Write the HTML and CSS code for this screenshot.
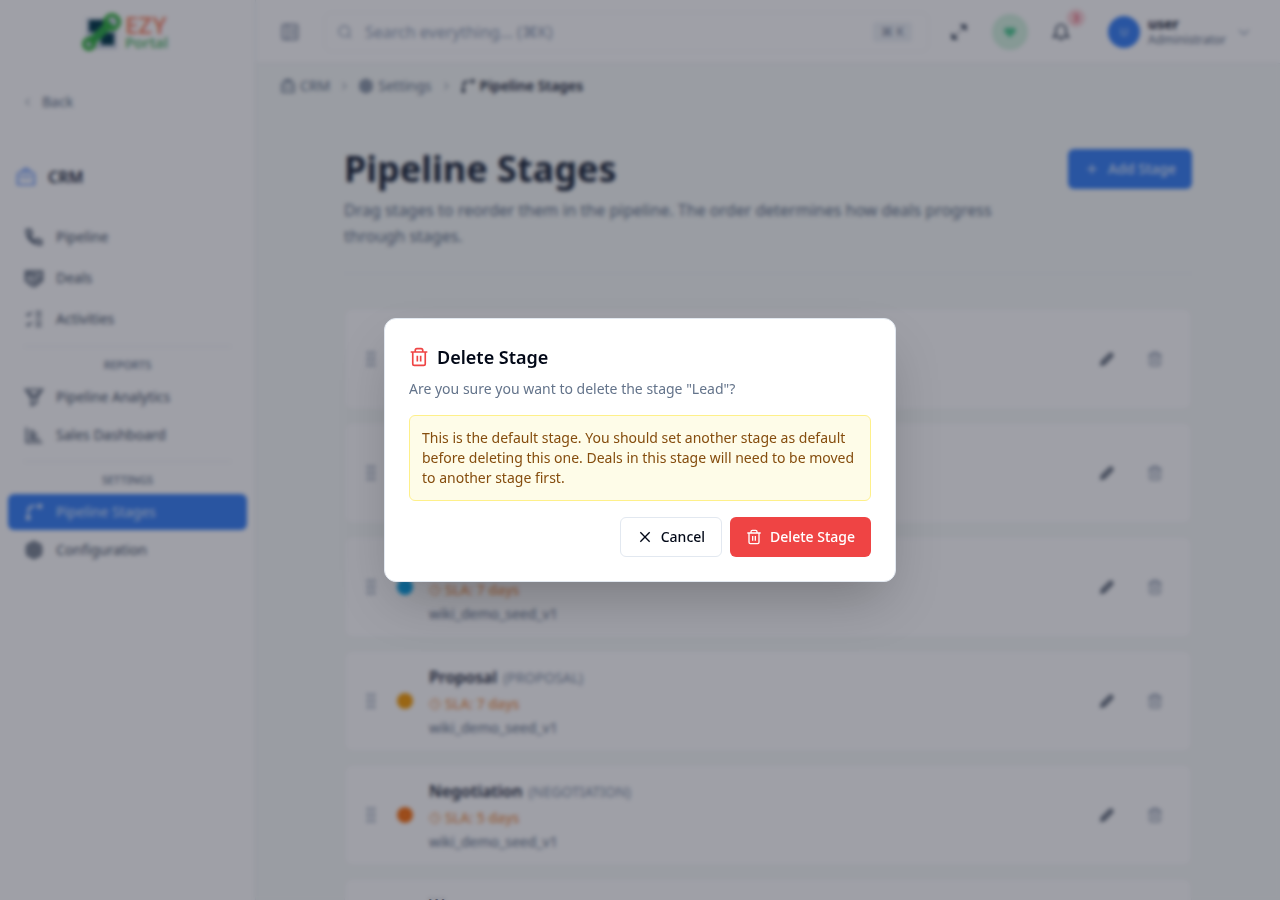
FILE: index.html
```html
<!DOCTYPE html>
<html lang="en">
<head>
<meta charset="UTF-8" />
<meta name="viewport" content="width=device-width, initial-scale=1" />
<title>Pipeline Stages - EZY Portal</title>
<link rel="stylesheet" href="styles.css">
</head>
<body>
  <!-- shared icons -->
  <svg class="sprite" aria-hidden="true">
    <symbol id="i-trash" viewBox="0 0 24 24"><path d="M2 6h20M4.500 6v14a2 2 0 0 0 2 2h11a2 2 0 0 0 2-2V6M7.500 6V4a2 2 0 0 1 2-2h5a2 2 0 0 1 2 2v2M10 10.500v7M14 10.500v7"/></symbol>
    <symbol id="i-pencil" viewBox="0 0 24 24"><path d="M3 21l1-5L16 4a2 2 0 0 1 3 0l1 1a2 2 0 0 1 0 3L8 20z" fill="currentColor" fill-opacity=".5"/></symbol>
    <symbol id="i-grip" viewBox="0 0 24 24"><path d="M9 3v4M9 10v4M9 17v4M15 3v4M15 10v4M15 17v4" stroke-width="4"/></symbol>
    <symbol id="i-clock" viewBox="0 0 24 24"><circle cx="12" cy="12" r="10"/><path d="M12 6v6l4 2"/></symbol>
    <symbol id="i-case" viewBox="0 0 24 24"><path d="M3 9l3-3h12l3 3v12H3zM8 6V3h8v3M3 12l5 2h8l5-2"/></symbol>
    <symbol id="i-gear" viewBox="0 0 24 24"><path d="M12 2l8 4 1 6-1 6-8 4-8-4-1-6 1-6z" fill="currentColor" fill-opacity=".5"/><circle cx="12" cy="12" r="4"/></symbol>
    <symbol id="i-stages" viewBox="0 0 24 24"><path d="M5 19V10a5 5 0 0 1 5-5h4"/><circle cx="5" cy="19" r="2" fill="currentColor"/><circle cx="19" cy="5" r="2" fill="currentColor"/><path d="M5 11l4-6"/></symbol>
    <symbol id="i-right" viewBox="0 0 24 24"><path d="M9 5l7 7-7 7"/></symbol>
  </svg>

  <div class="app">
    <aside class="sidebar">
      <div class="brand">
        <svg class="brand-mark" viewBox="0 0 40 40">
          <rect x="5" y="6" width="31" height="31" fill="#cbd5e1"/>
          <path d="M8 8h14v12H8zM20 21h13v12H20z" fill="#063b4c"/>
          <path d="M9 31L30 11" stroke="#2fa84a" stroke-width="9"/>
          <circle cx="31" cy="10" r="7" fill="none" stroke="#35b23f" stroke-width="4"/>
          <circle cx="8" cy="32" r="5" fill="none" stroke="#35b23f" stroke-width="4"/>
        </svg>
        <div class="brand-name"><span class="brand-ezy">EZY</span><span class="brand-portal">Portal</span></div>
      </div>
      <a class="back" href="#"><svg class="icon icon-xs" viewBox="0 0 24 24"><path d="M15 5l-7 7 7 7"/></svg>Back</a>
      <div class="module"><svg class="icon icon-md" viewBox="0 0 24 24"><path d="M2 10a4 4 0 0 1 4-4h12a4 4 0 0 1 4 4v11H2zM8 6a4 4 0 0 1 8 0M5 12h14"/></svg>CRM</div>
      <nav class="nav">
        <div class="nav-group nav-main">
          <a class="nav-item" href="#"><svg class="icon icon-md" viewBox="0 0 24 24"><path d="M3 3h5l2 6-3 2c1 3 3 5 6 6l2-3 6 2v5C11 22 2 13 3 3z" fill="currentColor" fill-opacity=".3"/></svg>Pipeline</a>
          <a class="nav-item" href="#"><svg class="icon icon-md" viewBox="0 0 24 24"><path d="M2 4h20v11l-9 7-4-1-7-6zM2 9l6-2 4 3 4-2M9 14l4 3 7-6" fill="currentColor" fill-opacity=".3"/></svg>Deals</a>
          <a class="nav-item" href="#"><svg class="icon icon-md" viewBox="0 0 24 24"><path d="M3 6l2 2 4-4M3 18l2 2 4-4M14 4h7M14 9h7M14 15h7M14 20h7"/></svg>Activities</a>
        </div>
        <hr>
        <h2 class="nav-label">Reports</h2>
        <div class="nav-group">
          <a class="nav-item" href="#"><svg class="icon icon-md" viewBox="0 0 24 24"><path d="M2 3h20l-7 10v6l-6 3v-9zM6 6l6 6 6-6"/></svg>Pipeline Analytics</a>
          <a class="nav-item" href="#"><svg class="icon icon-md" viewBox="0 0 24 24"><path d="M3 3v18h19M7 7h5M7 11h9M7 14h6M7 17h12"/></svg>Sales Dashboard</a>
        </div>
        <hr>
        <h2 class="nav-label">Settings</h2>
        <div class="nav-group">
          <a class="nav-item active" href="#"><svg class="icon icon-md"><use href="#i-stages"/></svg>Pipeline Stages</a>
          <a class="nav-item" href="#"><svg class="icon icon-md"><use href="#i-gear"/></svg>Configuration</a>
        </div>
      </nav>
    </aside>

    <div class="content">
      <header class="topbar">
        <button class="icon-btn toggle" type="button" aria-label="Toggle sidebar"><svg class="icon icon-md" viewBox="0 0 24 24"><rect x="3" y="3" width="18" height="18" rx="2"/><path d="M9 3v18M13 8h5M13 12h5M13 16h5"/></svg></button>
        <label class="search">
          <svg class="icon icon-sm" viewBox="0 0 24 24"><circle cx="11" cy="11" r="8"/><path d="M21 21l-4-4"/></svg>
          <input type="search" placeholder="Search everything... (⌘K)" aria-label="Search everything">
          <kbd>⌘ K</kbd>
        </label>
        <div class="tools">
          <button class="icon-btn" type="button" aria-label="Full screen"><svg class="icon icon-md" viewBox="0 0 24 24"><path d="M15 4h5v5zM4 15v5h5z" fill="currentColor"/><path d="M6 18L18 6" stroke-width="1"/></svg></button>
          <button class="icon-btn health" type="button" aria-label="System health"><svg class="icon icon-sm" viewBox="0 0 24 24"><path d="M12 19L5 12c-3-4 3-8 7-4 4-4 10 0 7 4z" fill="currentColor"/></svg></button>
          <button class="icon-btn bell" type="button" aria-label="Notifications"><svg class="icon icon-md" viewBox="0 0 24 24"><path d="M12 3a6 6 0 0 0-6 6v5l-3 4h18l-3-4V9a6 6 0 0 0-6-6zM10 21h4"/></svg><span class="badge">3</span></button>
          <button class="user" type="button">
            <span class="avatar">U</span>
            <span class="user-text"><strong>user</strong><small>Administrator</small></span>
            <svg class="icon icon-sm" viewBox="0 0 24 24"><path d="M5 9l7 7 7-7"/></svg>
          </button>
        </div>
      </header>

      <nav class="crumbs" aria-label="Breadcrumb">
        <a href="#"><svg class="icon icon-sm"><use href="#i-case"/></svg>CRM</a>
        <svg class="icon icon-xs"><use href="#i-right"/></svg>
        <a href="#"><svg class="icon icon-sm"><use href="#i-gear"/></svg>Settings</a>
        <svg class="icon icon-xs"><use href="#i-right"/></svg>
        <span class="current"><svg class="icon icon-sm"><use href="#i-stages"/></svg>Pipeline Stages</span>
      </nav>

      <main class="page">
        <div class="page-head">
          <div class="page-title">
            <h1>Pipeline Stages</h1>
            <p>Drag stages to reorder them in the pipeline. The order determines how deals progress through stages.</p>
          </div>
          <button class="btn btn-primary" type="button"><svg class="icon icon-sm" viewBox="0 0 24 24"><path d="M12 5v14M5 12h14"/></svg>Add Stage</button>
        </div>

        <ul class="stages">
          <li class="stage">
            <svg class="icon icon-md grip"><use href="#i-grip"/></svg><span class="dot gray"></span>
            <div class="stage-info"><h3>Lead <span>(LEAD)</span></h3><p class="sla"><svg class="icon icon-xs"><use href="#i-clock"/></svg>SLA: 7 days</p><p>wiki_demo_seed_v1</p></div>
            <div class="stage-actions"><button class="icon-btn" type="button" aria-label="Edit Lead"><svg class="icon icon-sm"><use href="#i-pencil"/></svg></button><button class="icon-btn muted" type="button" aria-label="Delete Lead"><svg class="icon icon-sm"><use href="#i-trash"/></svg></button></div>
          </li>
          <li class="stage">
            <svg class="icon icon-md grip"><use href="#i-grip"/></svg><span class="dot gray"></span>
            <div class="stage-info"><h3>Contacted <span>(CONTACTED)</span></h3><p class="sla"><svg class="icon icon-xs"><use href="#i-clock"/></svg>SLA: 7 days</p><p>wiki_demo_seed_v1</p></div>
            <div class="stage-actions"><button class="icon-btn" type="button" aria-label="Edit Contacted"><svg class="icon icon-sm"><use href="#i-pencil"/></svg></button><button class="icon-btn muted" type="button" aria-label="Delete Contacted"><svg class="icon icon-sm"><use href="#i-trash"/></svg></button></div>
          </li>
          <li class="stage">
            <svg class="icon icon-md grip"><use href="#i-grip"/></svg><span class="dot sky"></span>
            <div class="stage-info"><h3>Qualified <span>(QUALIFIED)</span></h3><p class="sla"><svg class="icon icon-xs"><use href="#i-clock"/></svg>SLA: 7 days</p><p>wiki_demo_seed_v1</p></div>
            <div class="stage-actions"><button class="icon-btn" type="button" aria-label="Edit Qualified"><svg class="icon icon-sm"><use href="#i-pencil"/></svg></button><button class="icon-btn muted" type="button" aria-label="Delete Qualified"><svg class="icon icon-sm"><use href="#i-trash"/></svg></button></div>
          </li>
          <li class="stage">
            <svg class="icon icon-md grip"><use href="#i-grip"/></svg><span class="dot amber"></span>
            <div class="stage-info"><h3>Proposal <span>(PROPOSAL)</span></h3><p class="sla"><svg class="icon icon-xs"><use href="#i-clock"/></svg>SLA: 7 days</p><p>wiki_demo_seed_v1</p></div>
            <div class="stage-actions"><button class="icon-btn" type="button" aria-label="Edit Proposal"><svg class="icon icon-sm"><use href="#i-pencil"/></svg></button><button class="icon-btn muted" type="button" aria-label="Delete Proposal"><svg class="icon icon-sm"><use href="#i-trash"/></svg></button></div>
          </li>
          <li class="stage">
            <svg class="icon icon-md grip"><use href="#i-grip"/></svg><span class="dot orange"></span>
            <div class="stage-info"><h3>Negotiation <span>(NEGOTIATION)</span></h3><p class="sla"><svg class="icon icon-xs"><use href="#i-clock"/></svg>SLA: 5 days</p><p>wiki_demo_seed_v1</p></div>
            <div class="stage-actions"><button class="icon-btn" type="button" aria-label="Edit Negotiation"><svg class="icon icon-sm"><use href="#i-pencil"/></svg></button><button class="icon-btn muted" type="button" aria-label="Delete Negotiation"><svg class="icon icon-sm"><use href="#i-trash"/></svg></button></div>
          </li>
          <li class="stage">
            <svg class="icon icon-md grip"><use href="#i-grip"/></svg><span class="dot green"></span>
            <div class="stage-info"><h3>Won</h3><p class="sla"><svg class="icon icon-xs"><use href="#i-clock"/></svg>SLA: 5 days</p><p>wiki_demo_seed_v1</p></div>
          </li>
        </ul>
      </main>
    </div>
  </div>

  <div class="overlay">
    <div class="dialog" role="alertdialog" aria-modal="true" aria-labelledby="dlg-title" aria-describedby="dlg-desc">
      <h2 id="dlg-title"><svg class="icon icon-md"><use href="#i-trash"/></svg>Delete Stage</h2>
      <p class="dialog-desc" id="dlg-desc">Are you sure you want to delete the stage "Lead"?</p>
      <div class="warning">This is the default stage. You should set another stage as default before deleting this one. Deals in this stage will need to be moved to another stage first.</div>
      <div class="dialog-actions">
        <button class="btn btn-outline" type="button"><svg class="icon icon-sm" viewBox="0 0 24 24"><path d="M5 5l14 14M19 5L5 19"/></svg>Cancel</button>
        <button class="btn btn-danger" type="button"><svg class="icon icon-sm"><use href="#i-trash"/></svg>Delete Stage</button>
      </div>
    </div>
  </div>
</body>
</html>
```
FILE: styles.css
```css
* { box-sizing: border-box; }
body { margin: 0; height: 100vh; overflow: hidden; font-family: "Noto Sans", "Liberation Sans", sans-serif; font-size: 14px; line-height: 20px; color: #1e293b; background: #f7faf8; }
h1, h2, h3, p, ul { margin: 0; padding: 0; }
a { color: inherit; text-decoration: none; }
button, input { font: inherit; color: inherit; }
button { border: 0; background: none; padding: 0; cursor: pointer; }

/* icons */
.sprite { display: none; }
.icon { flex: none; fill: none; stroke: currentColor; stroke-width: 2; }
.icon-xs { width: 12px; height: 12px; }
.icon-sm { width: 16px; height: 16px; }
.icon-md { width: 20px; height: 20px; }
.icon-btn { display: flex; align-items: center; justify-content: center; width: 36px; height: 36px; border-radius: 6px; color: #334155; }

.app { display: flex; height: 100vh; }

/* sidebar */
.sidebar { flex: none; width: 256px; background: #fff; border-right: 1px solid #e8edf0; }
.brand { display: flex; align-items: center; justify-content: center; gap: 4px; height: 64px; padding-right: 6px; }
.brand-mark { width: 40px; height: 40px; }
.brand-name { display: flex; flex-direction: column; font-weight: 600; }
.brand-ezy { font-size: 24px; line-height: 20px; color: #f98a6a; }
.brand-portal { font-size: 15px; line-height: 14px; color: #45ae5c; font-weight: 500; }
.back { display: flex; align-items: center; gap: 8px; height: 36px; margin: 20px 8px 0; padding: 0 14px; color: #64748b; }
.module { display: flex; align-items: center; gap: 12px; height: 24px; margin: 45px 16px 32px; font-size: 16px; font-weight: 600; }
.module .icon { color: #5b8df5; }
.nav { padding: 0 8px; }
.nav-group { display: flex; flex-direction: column; gap: 2px; }
.nav-main { gap: 5px; margin-top: -2px; padding-bottom: 1px; }
.nav-item { display: flex; align-items: center; gap: 12px; height: 36px; padding: 0 16px; border-radius: 6px; color: #475569; }
.nav-item.active { background: #3b82f6; color: #dbe8fd; }
.nav hr { height: 1px; margin: 8px 16px 0; border: 0; background: #eceff2; }
.nav-label { padding: 10px 0 6px; font-size: 11px; line-height: 16px; font-weight: 500; text-align: center; text-transform: uppercase; color: #64748b; }

/* top bar */
.content { flex: 1; min-width: 0; }
.topbar { display: flex; align-items: center; gap: 12px; height: 64px; padding: 0 28px 0 16px; background: #fff; border-bottom: 1px solid #eceff2; }
.toggle { color: #78859a; }
.search { display: flex; flex: 1; align-items: center; gap: 12px; height: 40px; margin-left: 4px; padding: 0 16px 0 12px; border: 1px solid #f6f8fa; border-radius: 8px; color: #94a3b8; }
.search input { flex: 1; min-width: 0; border: 0; padding: 0; outline: 0; background: none; font-size: 16px; }
.search input::placeholder { color: #94a3b8; opacity: 1; }
kbd { padding: 0 8px; border-radius: 4px; background: #eef2f6; font: inherit; font-size: 12px; color: #78859a; }
.tools { display: flex; align-items: center; gap: 15px; }
.health { border-radius: 50%; background: #d5f3e1; color: #55cc95; }
.bell { position: relative; }
.badge { position: absolute; top: -5px; right: -6px; width: 18px; height: 18px; border-radius: 50%; background: #fcd5d9; color: #e54e67; font-size: 10px; line-height: 18px; font-weight: 600; }
.user { display: flex; align-items: center; gap: 8px; margin-left: 14px; text-align: left; }
.user > .icon { color: #94a3b8; }
.avatar { width: 32px; height: 32px; border-radius: 50%; background: #3b82f6; color: #dbe8fd; font-size: 11px; line-height: 32px; text-align: center; }
.user-text { display: flex; flex-direction: column; padding-right: 2px; line-height: 16px; }
.user-text small { font-size: 12px; color: #64748b; }

.crumbs { display: flex; align-items: center; gap: 8px; height: 44px; padding: 0 24px; color: #64748b; }
.crumbs a, .crumbs span { display: flex; align-items: center; gap: 4px; }
.crumbs .current { color: #1e293b; font-weight: 600; }

/* page */
.page { max-width: 896px; margin: 0 auto; padding: 38px 24px; }
.page-head { display: flex; align-items: flex-start; justify-content: space-between; padding-bottom: 24px; border-bottom: 1px solid #f1f4f5; }
.page-title { max-width: 672px; }
h1 { font-size: 36px; line-height: 46px; font-weight: 700; }
.page-title p { margin-top: 5px; font-size: 16px; line-height: 26px; color: #64748b; }
.btn { display: flex; align-items: center; gap: 8px; height: 40px; padding: 0 16px; border-radius: 6px; font-weight: 500; white-space: nowrap; }
.btn-primary { margin-top: 3px; background: #3b82f6; color: #dbe8fd; }

.stages { display: flex; flex-direction: column; gap: 12px; margin-top: 34px; list-style: none; }
.stage { display: flex; align-items: center; height: 102px; padding: 0 18px 0 16px; border: 1px solid #f0f3f5; border-radius: 8px; background: #fff; }
.grip { color: #a5b1c2; }
.dot { width: 16px; height: 16px; margin: 0 16px; border-radius: 50%; }
.gray { background: #94a3b8; }
.sky { background: #0ea5e9; }
.amber { background: #f59e0b; }
.orange { background: #f97316; }
.green { background: #22c55e; }
.stage-info { flex: 1; color: #64748b; }
.stage-info h3 { font-size: 16px; line-height: 24px; font-weight: 600; color: #1e293b; }
.stage-info h3 span { margin-left: 2px; font-size: 14px; font-weight: 400; color: #8593a8; }
.stage-info p { margin-top: 4px; }
.stage-info .sla { display: flex; align-items: center; gap: 4px; color: #ee9450; font-weight: 500; }
.stage-actions { display: flex; gap: 12px; }
.muted { color: #8593a8; }

/* delete dialog */
.overlay { position: fixed; inset: 0; display: flex; align-items: center; justify-content: center; background: rgba(15, 18, 35, .4); backdrop-filter: blur(2px); }
.dialog { width: 100%; max-width: 512px; padding: 24px; border: 1px solid #e2e8f0; border-radius: 12px; background: #fff; box-shadow: 0 25px 50px -12px rgba(0, 0, 0, .25); }
.dialog h2 { display: flex; align-items: center; gap: 8px; font-size: 18px; line-height: 28px; font-weight: 600; color: #020817; }
.dialog h2 .icon { color: #ef4444; }
.dialog-desc { margin-top: 8px; color: #64748b; }
.warning { margin: 16px 0; padding: 12px; border: 1px solid #fef08a; border-radius: 6px; background: #fefce8; color: #854d0e; }
.dialog-actions { display: flex; justify-content: flex-end; gap: 8px; }
.btn-outline { border: 1px solid #e2e8f0; background: #fff; color: #020817; }
.btn-danger { background: #ef4444; color: #fff; }
```
